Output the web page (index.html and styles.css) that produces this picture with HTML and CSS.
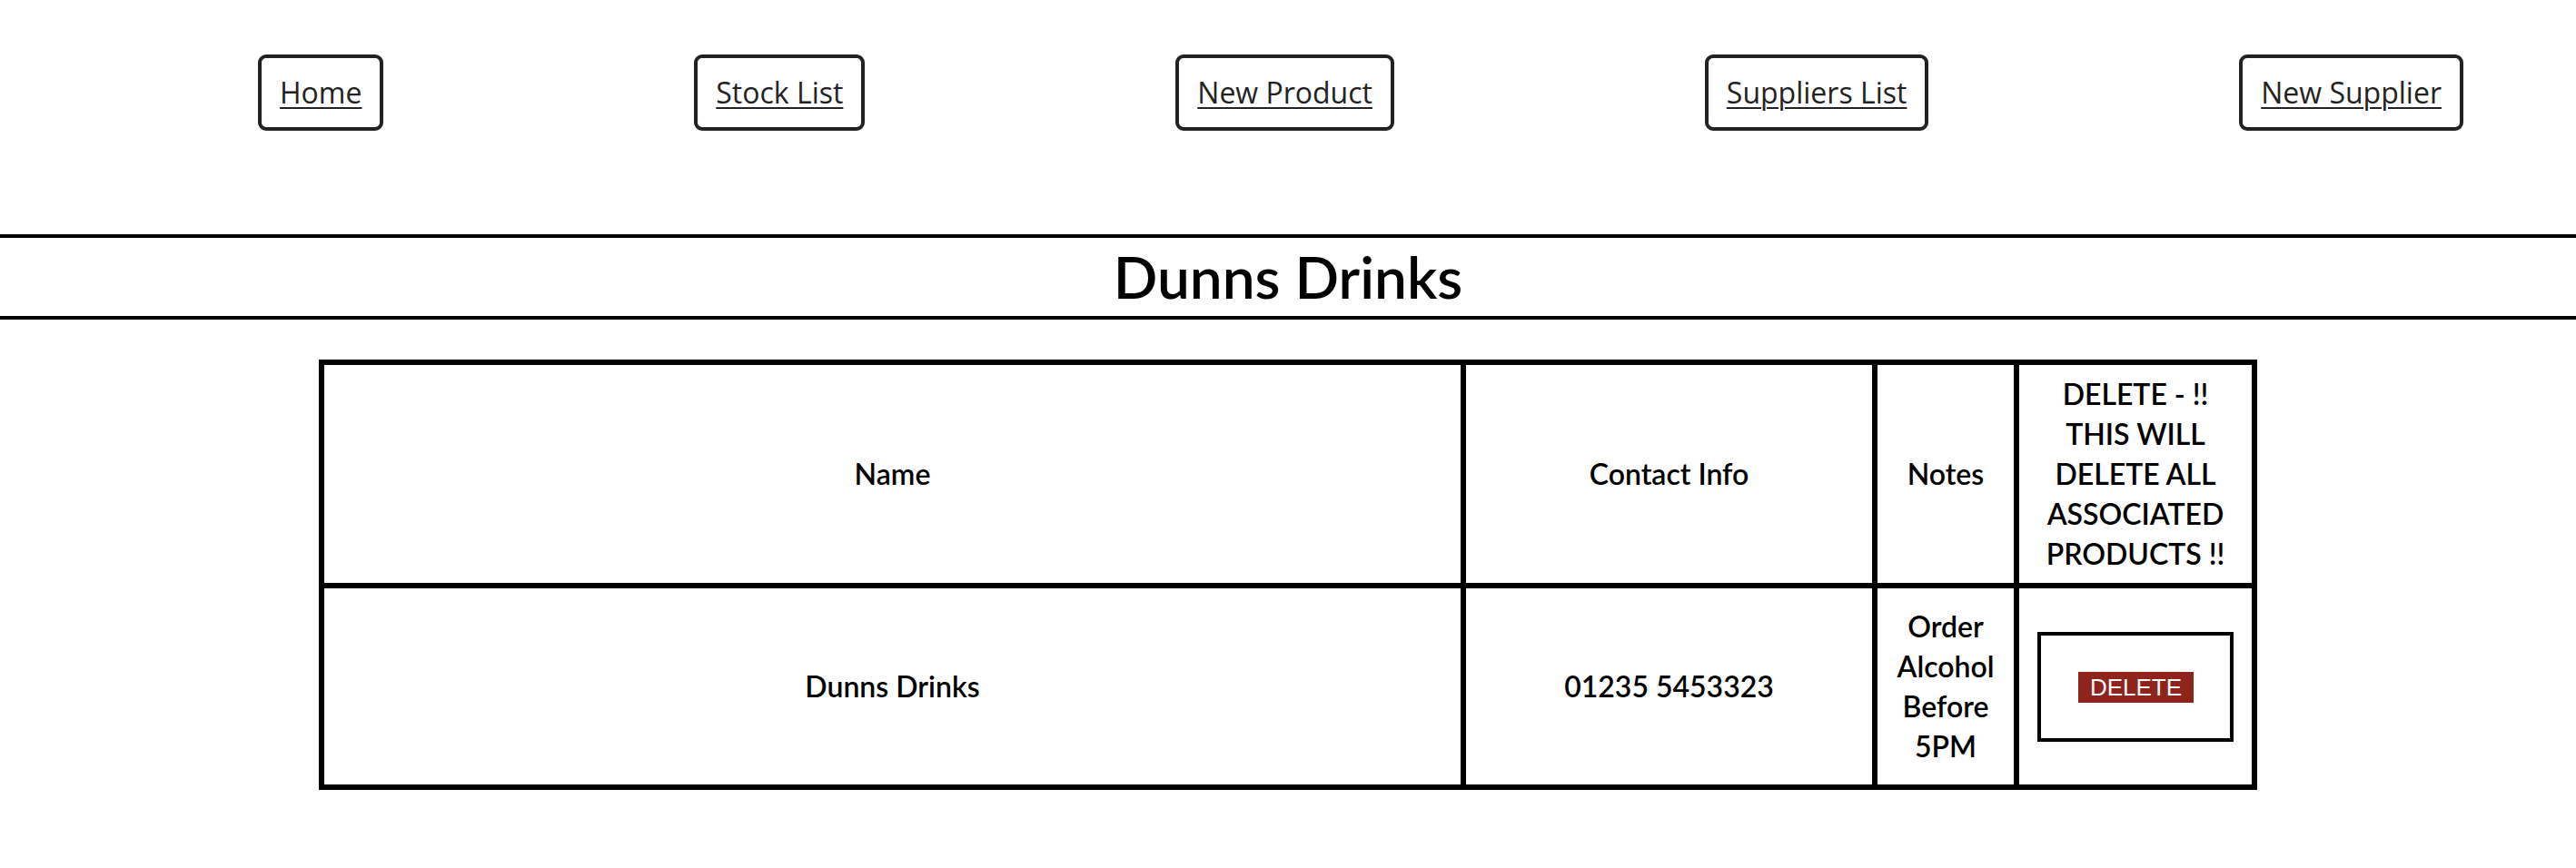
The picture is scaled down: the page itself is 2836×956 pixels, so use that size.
FILE: index.html
```html
<!DOCTYPE html>
<html lang="en">
<head>
<meta charset="utf-8">
<title>Dunns Drinks</title>
<link rel="stylesheet" href="styles.css">
</head>
<body>
<nav class="nav">
  <a class="nav-btn" href="#">Home</a>
  <a class="nav-btn" href="#">Stock List</a>
  <a class="nav-btn" href="#">New Product</a>
  <a class="nav-btn" href="#">Suppliers List</a>
  <a class="nav-btn" href="#">New Supplier</a>
</nav>
<h1 class="title">Dunns Drinks</h1>
<table class="suppliers">
  <thead>
    <tr>
      <th class="col-name">Name</th>
      <th class="col-contact">Contact Info</th>
      <th class="col-notes">Notes</th>
      <th class="col-delete">DELETE - !! THIS WILL DELETE ALL ASSOCIATED PRODUCTS !!</th>
    </tr>
  </thead>
  <tbody>
    <tr>
      <td>Dunns Drinks</td>
      <td>01235 5453323</td>
      <td>Order Alcohol Before 5PM</td>
      <td><form class="del-form"><button type="button" class="del-btn">DELETE</button></form></td>
    </tr>
  </tbody>
</table>
</body>
</html>
```
FILE: styles.css
```css
html, body {
  margin: 0;
  padding: 0;
  background: #fff;
}
body {
  font-family: "Lato", "Noto Sans", sans-serif;
  color: #000;
}
.nav {
  display: flex;
  justify-content: space-between;
  align-items: flex-start;
  padding: 60px 124px 0 284px;
}
.nav-btn {
  display: block;
  font-family: "Open Sans", "Noto Sans", sans-serif;
  font-size: 32px;
  line-height: 44px;
  color: #222;
  text-decoration: underline;
  text-decoration-thickness: 2px;
  text-underline-offset: 4px;
  border: 4px solid #222;
  border-radius: 9px;
  padding: 16px 20px;
}
.title {
  margin: 114px 0 0;
  border-top: 4px solid #000;
  border-bottom: 4px solid #000;
  font-size: 64px;
  line-height: 86px;
  font-weight: 600;
  text-align: center;
}
.suppliers {
  margin: 44px auto 0;
  width: 2134px;
  table-layout: fixed;
  border-collapse: separate;
  border-spacing: 0;
  border: 3px solid #000;
  font-size: 32px;
  font-weight: 600;
  line-height: 44px;
}
.suppliers th,
.suppliers td {
  border: 3px solid #000;
  text-align: center;
  vertical-align: middle;
  font-weight: 600;
}
.suppliers th {
  padding: 10px 20px;
  height: 220px;
}
.suppliers td {
  padding: 20px;
  height: 176px;
}
.col-name { width: 1211px; }
.col-contact { width: 407px; }
.col-notes { width: 110px; }
.col-delete { width: 216px; }
.del-form {
  margin: 0;
  border: 4px solid #000;
  padding: 40px 39px 39px 40px;
  display: flex;
  justify-content: center;
}
.del-btn {
  font-family: "Liberation Sans", Arial, sans-serif;
  font-size: 26px;
  line-height: 30px;
  padding: 2px 13px;
  border: none;
  background: #8f241d;
  color: #fff;
  cursor: pointer;
}
```
